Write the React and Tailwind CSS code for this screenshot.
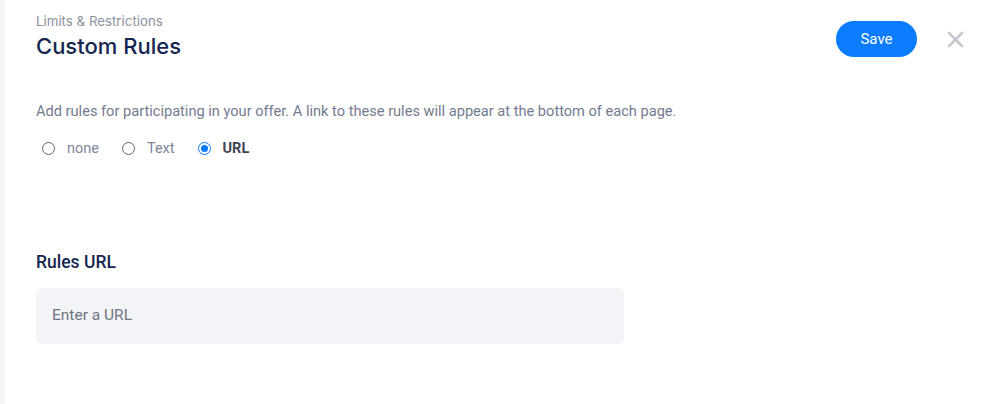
const OPTIONS = [
  { id: 'none', label: 'none' },
  { id: 'text', label: 'Text' },
  { id: 'url', label: 'URL' },
];

function Radio({ checked, label }) {
  return (
    <label className="flex items-center gap-[12px] cursor-pointer">
      {checked ? (
        <span className="h-[13px] w-[13px] rounded-full border border-[#0a7cff] flex items-center justify-center">
          <span className="h-[7px] w-[7px] rounded-full bg-[#0a7cff]" />
        </span>
      ) : (
        <span className="h-[13px] w-[13px] rounded-full border border-[#5f6370]" />
      )}
      <span className={checked ? 'text-[14.5px] font-bold text-[#3f4452]' : 'text-[14.5px] text-[#80869a]'}>
        {label}
      </span>
    </label>
  );
}

export default function App() {
  const selected = 'url';

  return (
    <div className="flex h-[404px] w-full bg-white font-['Roboto',sans-serif]">
      <div className="w-[5px] shrink-0 bg-[#f4f5f8]" />

      <div className="flex-1 pl-[31px] pr-[31px]">
        {/* en-tete */}
        <div className="flex items-start justify-between pt-[13px]">
          <div>
            <p className="font-['Inter',sans-serif] text-[13.3px] leading-[16px] text-[#8d919d]">
              Limits &amp; Restrictions
            </p>
            <h1 className="mt-[3px] font-['Inter',sans-serif] text-[22px] leading-[28px] font-medium text-[#15254f]">
              Custom Rules
            </h1>
          </div>
          <div className="flex items-center gap-[30px] pt-[8px]">
            <button className="h-[36px] w-[81px] rounded-full bg-[#0a7cff] text-[15px] text-white">
              Save
            </button>
            <svg width="17" height="17" viewBox="0 0 17 17" className="text-[#c5c7cf]">
              <path d="M2 2 L15 15 M15 2 L2 15" stroke="currentColor" strokeWidth="2.6" strokeLinecap="round" />
            </svg>
          </div>
        </div>

        <p className="mt-[42px] text-[14.6px] leading-[18px] text-[#747b90]">
          Add rules for participating in your offer. A link to these rules will appear at the bottom of each page.
        </p>

        <div className="mt-[18px] flex items-center gap-[23px] pl-[6px]">
          {OPTIONS.map((o) => (
            <Radio key={o.id} checked={o.id === selected} label={o.label} />
          ))}
        </div>

        <h2 className="mt-[91px] text-[17.5px] leading-[22px] font-medium text-[#15254f]">Rules URL</h2>

        <div className="mt-[15px] flex h-[56px] w-[588px] items-center rounded-[6px] bg-[#f3f4f7] px-[16px]">
          <span className="text-[15.5px] text-[#6f7482]">Enter a URL</span>
        </div>
      </div>
    </div>
  );
}
